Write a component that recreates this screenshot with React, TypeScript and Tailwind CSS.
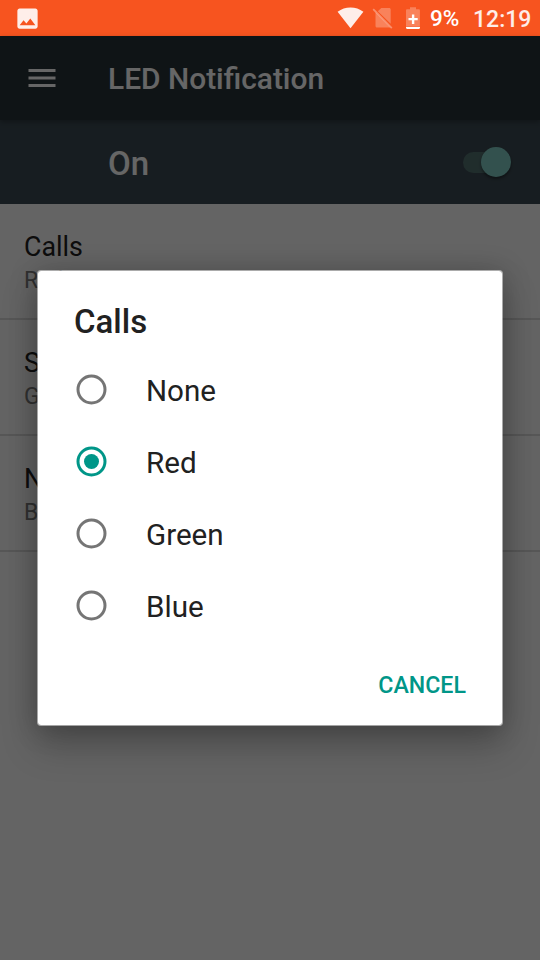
import { useState } from 'react';

const COLORS = ['None', 'Red', 'Green', 'Blue'];

const ROWS = [
  { title: 'Calls', summary: 'Red' },
  { title: 'SMS', summary: 'Green' },
  { title: 'Notifications', summary: 'Blue' },
];

function StatusBar() {
  return (
    <div className="flex h-9 shrink-0 items-center bg-[#f7541f] text-[22.5px] font-medium text-white/90">
      {/* Screenshot notification */}
      <svg className="ml-[13.5px] size-[27px]" viewBox="0 0 24 24" fill="currentColor">
        <path d="M21 19V5c0-1.1-.9-2-2-2H5c-1.1 0-2 .9-2 2v14c0 1.1.9 2 2 2h14c1.1 0 2-.9 2-2zM8.5 13.5l2.5 3.01L14.5 12l4.5 6H5l3.5-4.5z" />
      </svg>
      <div className="ml-auto flex h-full items-center">
        <svg className="h-9 w-[27px]" viewBox="0 0 27 36" fill="currentColor">
          <path d="M13.5 28.2.6 11.7C4.4 8.9 8.7 7.4 13.5 7.4s9.1 1.5 12.9 4.3z" />
        </svg>
        {/* No SIM card */}
        <svg className="ml-[8px] h-9 w-[22px]" viewBox="0 0 22 36">
          <path d="M9.3 8.1h7.9c.9 0 1.5.6 1.5 1.5v14.2L5.8 11.2zM3.5 12.3l14.6 14.9c-.3.2-.5.3-.9.3H5c-.9 0-1.5-.6-1.5-1.5z" fill="#fff" fillOpacity=".27" />
          <path d="M1.2 9.2 19.8 28.2" stroke="#fff" strokeOpacity=".35" strokeWidth="1.8" />
        </svg>
        {/* Battery, saver on */}
        <svg className="ml-[11px] h-9 w-4" viewBox="0 0 16 36">
          <path d="M5 7.2h6v2h2.7c.7 0 1.2.5 1.2 1.2v16.4H1V10.4c0-.7.5-1.2 1.2-1.2H5z" fill="#fff" fillOpacity=".27" />
          <path d="M1 26.9h14v.9c0 .7-.5 1.2-1.2 1.2H2.2c-.7 0-1.2-.5-1.2-1.2z" fill="#fff" />
          <path d="M6.9 14.4h2.4v3.5h3.4v2.4H9.3v3.6H6.9v-3.6H3.5v-2.4h3.4z" fill="#fff" />
        </svg>
        <span className="ml-[9px] w-[30px] pt-[2px] text-[22.5px] text-white">9%</span>
        <span className="ml-[13px] mr-[9px] w-[58px] whitespace-nowrap pt-[4px] text-[23px]">12:19</span>
      </div>
    </div>
  );
}

function Radio({ checked }: { checked: boolean }) {
  const color = checked ? '#009688' : '#757575';
  return (
    <svg className="size-8" viewBox="0 0 32 32">
      <circle cx="15.5" cy="15.5" r="13.5" fill="none" stroke={color} strokeWidth="3" />
      {checked && <circle cx="15.5" cy="15.5" r="7.5" fill={color} />}
    </svg>
  );
}

export default function App() {
  const [selected, setSelected] = useState('Red');

  return (
    <div className="flex h-[960px] w-[540px] flex-col overflow-hidden bg-[#fafafa] font-['Roboto','Liberation_Sans',sans-serif]">
      <StatusBar />

      <div className="relative flex-1">
        <header className="relative z-10 flex h-[84px] items-center bg-[#263238] pl-6 shadow-[0_2px_5px_rgba(0,0,0,0.3)]">
          <svg className="size-9" viewBox="0 0 24 24" fill="#fff">
            <path d="M3 18h18v-2H3v2zm0-5h18v-2H3v2zm0-7v2h18V6H3z" />
          </svg>
          <h1 className="ml-12 pt-[2px] text-[29.9px] font-medium leading-9 text-white">LED Notification</h1>
        </header>

        <div className="flex h-[84px] items-center justify-between bg-[#3b4a53] pl-[108px] pr-[29px]">
          <span className="pt-1 text-[33px] font-medium leading-10 text-white">On</span>
          <span className="flex h-[21px] w-[48px] items-center justify-end rounded-full bg-[#51706f]">
            <span className="size-[30px] rounded-full bg-[#80cbc4] shadow-[0_2px_3px_rgba(0,0,0,0.4)]" />
          </span>
        </div>

        <ul>
          {ROWS.map((row) => (
            <li key={row.title} className="h-[116px] border-b-2 border-[#dadada] pl-6 pt-[27px]">
              <p className="text-[26.8px] leading-[33px] text-[#212121]">{row.title}</p>
              <p className="text-[23px] leading-[34px] text-[#7a7a7a]">{row.summary}</p>
            </li>
          ))}
        </ul>

        {/* Dialog over the dimmed screen */}
        <div className="absolute inset-0 z-20 flex items-start justify-center bg-black/60 pt-[234px]">
          <div
            role="dialog"
            aria-label="Calls"
            className="flex h-[456px] w-[466px] flex-col rounded-[4px] border border-white/50 bg-white bg-clip-padding pt-[30px] shadow-[0_20px_36px_rgba(0,0,0,0.22),0_2px_28px_rgba(0,0,0,0.22)]"
          >
            <h2 className="pl-9 text-[33px] font-medium leading-[42px] text-[#212121]">Calls</h2>
            <div className="mt-[11px]">
              {COLORS.map((color) => (
                <button
                  key={color}
                  onClick={() => setSelected(color)}
                  className="flex h-[72px] w-full items-center pl-[38px] text-left"
                >
                  <Radio checked={selected === color} />
                  <span className="ml-[38px] pt-[3px] text-[29.6px] text-[#212121]">{color}</span>
                </button>
              ))}
            </div>
            <div className="mt-[25px] flex justify-end pr-[36px]">
              <button className="text-[23.2px] font-medium leading-[36px] text-[#009688]">CANCEL</button>
            </div>
          </div>
        </div>
      </div>
    </div>
  );
}
